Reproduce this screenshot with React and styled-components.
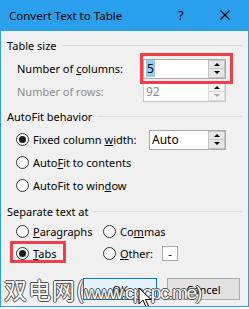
import styled, {createGlobalStyle} from "styled-components"

const Global = createGlobalStyle`
    body {
        margin: 0;
        background: #ffffff;
        font-family: "Segoe UI", "Noto Sans", "Liberation Sans", sans-serif;
    }
`

const Dialog = styled.div`
    position: relative;
    width: 249px;
    height: 307px;
    box-sizing: border-box;
    background: #f0f0f0;
    border: 1px solid #2a9fec;
    border-top: none;
    overflow: hidden;
    display: flex;
    flex-direction: column;
`

const TitleBar = styled.div`
    height: 31px;
    background: #2a9fec;
    display: flex;
    align-items: center;
    padding: 0 0 1px 8px;
    box-sizing: border-box;
    font-size: 11.5px;
    color: #000;
`

const TitleText = styled.div`
    flex: 1;
`

const HelpIco = styled.div`
    width: 16px;
    font-size: 13px;
    margin-right: 26px;
`

const CloseIco = styled.svg`
    width: 10px;
    height: 10px;
    margin-right: 18px;
`

const Body = styled.div`
    display: flex;
    flex-direction: column;
    padding: 6px 6px 0 6px;
    font-size: 11px;
    color: #000;
`

const GroupHeader = styled.div`
    height: 16px;
    display: flex;
    align-items: center;
    margin-top: ${({top}) => top}px;

    &::after {
        content: "";
        flex: 1;
        height: 1px;
        background: #dcdcdc;
        margin-left: 5px;
    }
`

const Row = styled.div`
    height: ${({h}) => h || 23}px;
    display: flex;
    align-items: center;
    padding-left: ${({pad}) => pad}px;
    color: ${({disabled}) => disabled ? "#8d8d8d" : "#000"};
`

const Label = styled.div`
    width: ${({w}) => w}px;
`

const U = styled.span`
    text-decoration: underline;
    text-underline-offset: 1px;
`

const Spinner = styled.div`
    width: ${({w}) => w || 83}px;
    height: 20px;
    box-sizing: border-box;
    border: 1px solid ${({disabled}) => disabled ? "#c8c8c8" : "#a9a9a9"};
    background: #fff;
    display: flex;
`

const SpinValue = styled.div`
    flex: 1;
    display: flex;
    align-items: center;
    padding-left: 2px;
    font-size: 12px;
    color: ${({disabled}) => disabled ? "#8d8d8d" : "#000"};
`

const Selected = styled.span`
    background: #99c9ef;
    padding: 0 1px;
`

const SpinButtons = styled.div`
    width: 17px;
    display: flex;
    flex-direction: column;
    border-left: 1px solid #fff;
`

const SpinBtn = styled.div`
    flex: 1;
    background: ${({disabled}) => disabled ? "#f4f4f4" : "#e6e6e6"};
    border: 1px solid ${({disabled}) => disabled ? "#dadada" : "#c4c4c4"};
    display: flex;
    align-items: center;
    justify-content: center;
    margin-top: ${({down}) => down ? "-1px" : "0"};
`

const Arrow = styled.div`
    width: 0;
    height: 0;
    border-left: 3px solid transparent;
    border-right: 3px solid transparent;
    ${({down, disabled}) => down
        ? `border-top: 3px solid ${disabled ? "#a8a8a8" : "#000"};`
        : `border-bottom: 3px solid ${disabled ? "#a8a8a8" : "#000"};`}
`

const Radio = styled.div`
    width: 13px;
    height: 13px;
    flex-shrink: 0;
    box-sizing: border-box;
    border: 1px solid #333;
    border-radius: 50%;
    background: #fff;
    display: flex;
    align-items: center;
    justify-content: center;
    margin-right: 4px;

    &::after {
        content: "";
        display: ${({checked}) => checked ? "block" : "none"};
        width: 7px;
        height: 7px;
        border-radius: 50%;
        background: #1b1b1b;
    }
`

const RadioItem = styled.div`
    display: flex;
    align-items: center;
    width: ${({w}) => w ? w + "px" : "auto"};
`

const Highlight = styled.div`
    position: relative;

    &::before {
        content: "";
        position: absolute;
        left: ${({l}) => l}px;
        top: ${({t}) => t}px;
        width: ${({w}) => w}px;
        height: ${({h}) => h}px;
        border: 3px solid #ef4049;
        box-sizing: border-box;
        pointer-events: none;
    }
`

const SmallBox = styled.div`
    width: 16px;
    height: 15px;
    box-sizing: border-box;
    border: 1px solid #a9a9a9;
    background: #fff;
    margin-left: 9px;
    display: flex;
    align-items: center;
    justify-content: center;
    font-size: 11px;
`

const Buttons = styled.div`
    display: flex;
    margin-top: 14px;
    padding-left: 76px;
    gap: 10px;
`

const Button = styled.div`
    width: ${({w}) => w}px;
    height: 22px;
    box-sizing: border-box;
    border: 1px solid ${({primary}) => primary ? "#0078d7" : "#adadad"};
    background: ${({primary}) => primary ? "#e5f1fb" : "#e1e1e1"};
    display: flex;
    align-items: center;
    justify-content: center;
`

const Watermark = styled.div`
    position: absolute;
    left: 3px;
    top: 272px;
    display: flex;
    align-items: baseline;
    color: #fff;
    white-space: nowrap;
    text-shadow: -1px 0 #4a4a4a, 1px 0 #4a4a4a, 0 -1px #4a4a4a, 0 1px #4a4a4a;
    pointer-events: none;
`

const MarkCjk = styled.span`
    font-family: "Noto Sans CJK SC", sans-serif;
    font-size: 23px;
    letter-spacing: 1px;
`

const MarkLatin = styled.span`
    font-family: "Liberation Sans", sans-serif;
    font-size: 19px;
    letter-spacing: -1.3px;
`

const Cursor = styled.svg`
    position: absolute;
    left: 137px;
    top: 287px;
    width: 14px;
    height: 22px;
`

export default function App() {
    return (
        <>
            <Global/>
            <Dialog>
                <TitleBar>
                    <TitleText>Convert Text to Table</TitleText>
                    <HelpIco>?</HelpIco>
                    <CloseIco viewBox="0 0 10 10">
                        <path d="M0.5 0.5 L9.5 9.5 M9.5 0.5 L0.5 9.5" stroke="#000" strokeWidth="1.1"/>
                    </CloseIco>
                </TitleBar>
                <Body>
                    <GroupHeader top={0}>Table size</GroupHeader>
                    <Row pad={10} style={{marginTop: 4}}>
                        <Label w={126}>Number of <U>c</U>olumns:</Label>
                        <Highlight l={-3} t={-6} w={93} h={31}>
                            <Spinner>
                                <SpinValue><Selected>5</Selected></SpinValue>
                                <SpinButtons>
                                    <SpinBtn><Arrow/></SpinBtn>
                                    <SpinBtn down><Arrow down/></SpinBtn>
                                </SpinButtons>
                            </Spinner>
                        </Highlight>
                    </Row>
                    <Row pad={10} disabled>
                        <Label w={126}>Number of rows:</Label>
                        <Spinner disabled>
                            <SpinValue disabled>92</SpinValue>
                            <SpinButtons>
                                <SpinBtn disabled><Arrow/></SpinBtn>
                                <SpinBtn disabled down><Arrow down disabled/></SpinBtn>
                            </SpinButtons>
                        </Spinner>
                    </Row>

                    <GroupHeader top={5}>AutoFit behavior</GroupHeader>
                    <Row pad={9} style={{marginTop: 4}}>
                        <RadioItem w={133}>
                            <Radio checked/>
                            <span>Fixed column <U>w</U>idth:</span>
                        </RadioItem>
                        <Spinner w={77}>
                            <SpinValue>Auto</SpinValue>
                            <SpinButtons>
                                <SpinBtn><Arrow/></SpinBtn>
                                <SpinBtn down><Arrow down/></SpinBtn>
                            </SpinButtons>
                        </Spinner>
                    </Row>
                    <Row pad={9}>
                        <RadioItem><Radio/><span>Auto<U>F</U>it to contents</span></RadioItem>
                    </Row>
                    <Row pad={9}>
                        <RadioItem><Radio/><span>AutoFit to win<U>d</U>ow</span></RadioItem>
                    </Row>

                    <GroupHeader top={6}>Separate text at</GroupHeader>
                    <Row pad={9} h={22} style={{marginTop: 1}}>
                        <RadioItem w={87}><Radio/><span><U>P</U>aragraphs</span></RadioItem>
                        <RadioItem><Radio/><span>Co<U>m</U>mas</span></RadioItem>
                    </Row>
                    <Row pad={9} h={22}>
                        <Highlight l={-6} t={-5} w={56} h={22}>
                            <RadioItem w={87}><Radio checked/><span><U>T</U>abs</span></RadioItem>
                        </Highlight>
                        <RadioItem><Radio/><span><U>O</U>ther:</span><SmallBox>-</SmallBox></RadioItem>
                    </Row>

                    <Buttons>
                        <Button primary w={74}>OK</Button>
                        <Button w={73}>Cancel</Button>
                    </Buttons>
                </Body>
                <Watermark>
                    <MarkCjk>双电网(</MarkCjk>
                    <MarkLatin>www.cpcpc.me)</MarkLatin>
                </Watermark>
                <Cursor viewBox="0 0 14 22">
                    <path d="M1 1 L1 17 L5 13 L8 20 L10.5 19 L7.5 12.5 L13 12.5 Z" fill="#fff" stroke="#000" strokeWidth="1"/>
                </Cursor>
            </Dialog>
        </>
    )
}
